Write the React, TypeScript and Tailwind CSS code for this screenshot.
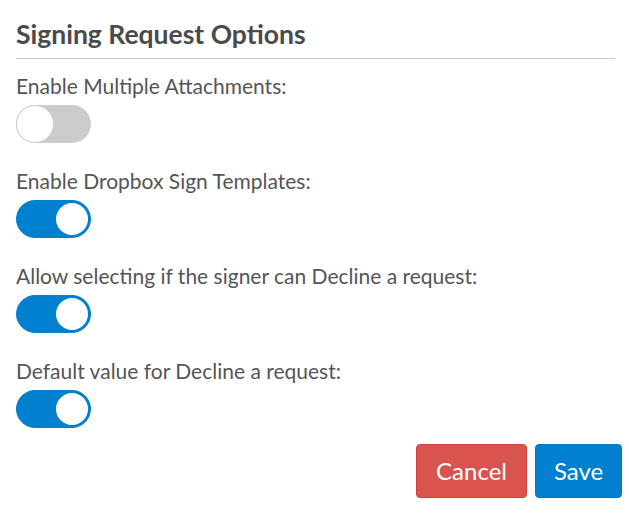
import React from "react";

function Toggle({ on }: { on: boolean }) {
  return on ? (
    <div className="relative w-[75px] h-[38px] rounded-full bg-[#0080cf] border border-[#0080cf]">
      <div className="absolute right-[0px] top-[0px] w-[36px] h-[36px] rounded-full bg-white border-[2px] border-[#0080cf]" />
    </div>
  ) : (
    <div className="relative w-[75px] h-[38px] rounded-full bg-[#cccccc]">
      <div className="absolute left-0 top-0 w-[38px] h-[38px] rounded-full bg-white border border-[#d0d0d0]" />
    </div>
  );
}

export default function App() {
  const items: [string, boolean][] = [
    ["Enable Multiple Attachments:", false],
    ["Enable Dropbox Sign Templates:", true],
    ["Allow selecting if the signer can Decline a request:", true],
    ["Default value for Decline a request:", true],
  ];
  return (
    <div className="w-[629px] h-[529px] bg-white pl-4 pr-[7px] pt-[17px]" style={{ fontFamily: "Lato, 'Noto Sans', sans-serif" }}>
      <h1 className="text-[26.5px] leading-[34px] font-bold text-[#4a4a4a] mr-[7px]">Signing Request Options</h1>
      <div className="border-b border-[#cccccc] mt-[7px] mr-[7px]" />
      <div className="flex flex-col gap-[23px] mt-[12px]">
        {items.map(([label, on], i) => (
          <div key={i} className="flex flex-col">
            <div className="text-[21px] leading-[30px] text-[#555555] mb-[4px]">{label}</div>
            <Toggle on={on} />
          </div>
        ))}
      </div>
      <div className="flex justify-end gap-2 mt-[16px]">
        <button className="w-[111px] h-[54px] rounded-[4px] bg-[#d9534f] border border-[#d43f3a] text-white text-[24px]">Cancel</button>
        <button className="w-[87px] h-[54px] rounded-[4px] bg-[#0080cf] border border-[#0077c2] text-white text-[24px]">Save</button>
      </div>
    </div>
  );
}
